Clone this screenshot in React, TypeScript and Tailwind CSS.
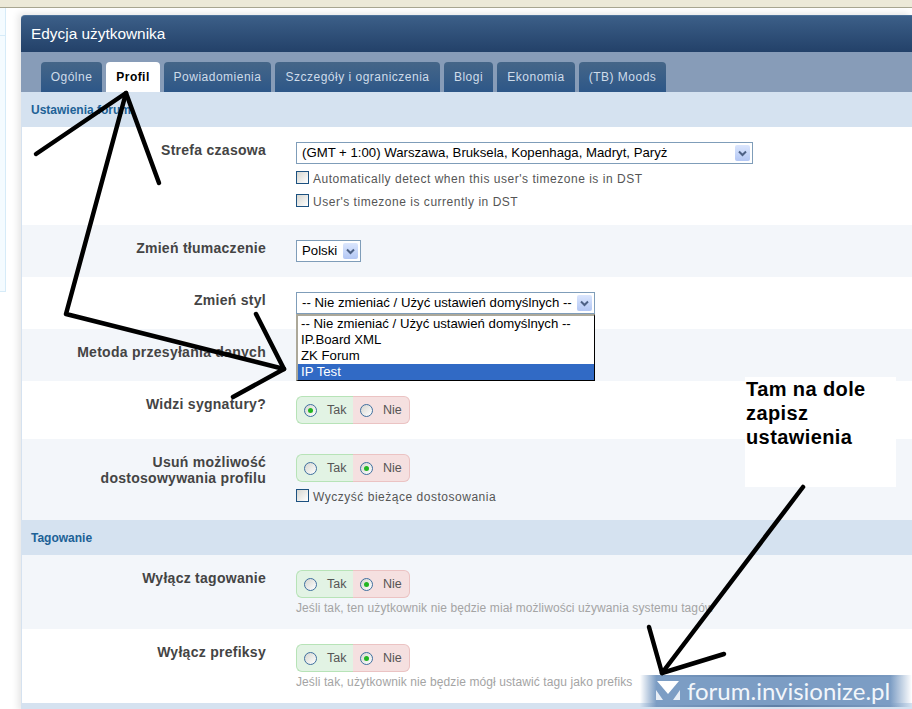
const tabs = [
  { name: "Ogólne", width: "w-[61px]" },
  { name: "Profil", width: "w-[54px]" },
  { name: "Powiadomienia", width: "w-[107px]" },
  { name: "Szczegóły i ograniczenia", width: "w-[165px]" },
  { name: "Blogi", width: "w-[49px]" },
  { name: "Ekonomia", width: "w-[78px]" },
  { name: "(TB) Moods", width: "w-[87px]" },
];

const Chevron = () => (
  <span className="flex h-[16px] w-[15px] items-center justify-center rounded-[2px] bg-gradient-to-b from-[#dbe6fd] to-[#b3c7f4]">
    <svg width="9" height="7" viewBox="0 0 9 7">
      <path d="M1 1.5 L4.5 5 L8 1.5" fill="none" stroke="#4d6185" strokeWidth="2" />
    </svg>
  </span>
);

const Select = ({ text, width }: { text: string; width: string }) => (
  <div className={`flex h-[22px] items-center justify-between border border-[#7f9db9] bg-white pl-[5px] pr-[2px] text-[13.2px] text-black ${width}`}>
    <span className="whitespace-nowrap">{text}</span>
    <Chevron />
  </div>
);

const Check = ({ label }: { label: string }) => (
  <div className="flex h-[16px] items-start gap-[4px] text-[12px] leading-[16px] tracking-[0.52px] text-[#555]">
    <span className="h-[13px] w-[13px] border border-[#1c5180] bg-gradient-to-br from-[#d6d6d0] to-white" />
    {label}
  </div>
);

const Radio = ({ on }: { on: boolean }) => (
  <span className="flex h-[13px] w-[13px] items-center justify-center rounded-full border-[1.5px] border-[#3f6f9f] bg-gradient-to-br from-[#d6d6d0] to-white">
    {on && <span className="h-[5px] w-[5px] rounded-full bg-[#22b522]" />}
  </span>
);

const YesNo = ({ yes }: { yes: boolean }) => (
  <div className="flex h-[28px] w-[114px] text-[12.5px] text-[#555]">
    <div className="flex w-[57px] items-center gap-[10px] rounded-l-[6px] border border-r-0 border-[#b7e3b7] bg-[#e2f3e4] pl-[7px]">
      <Radio on={yes} />
      Tak
    </div>
    <div className="flex w-[57px] items-center gap-[10px] rounded-r-[6px] border border-l-0 border-[#ebc3c3] bg-[#f5e0e0] pl-[7px]">
      <Radio on={!yes} />
      Nie
    </div>
  </div>
);

const Hint = ({ children }: { children: string }) => (
  <div className="mt-[2px] text-[12px] leading-[16px] tracking-[0.1px] text-[#a4a4a4] whitespace-nowrap">{children}</div>
);

const Row = ({ label, tint, height, children }: { label: React.ReactNode; tint?: boolean; height: string; children?: React.ReactNode }) => (
  <div className={`relative grid grid-cols-[244px_1fr] gap-x-[30px] border-l border-[#d5e2f0] pt-[15px] ${height} ${tint ? "bg-[#f3f6fa]" : "bg-white"}`}>
    <div className="text-right text-[14px] font-bold leading-[16px] tracking-[0.27px] text-[#444]">{label}</div>
    <div>{children}</div>
  </div>
);

const Section = ({ title, height }: { title?: string; height: string }) => (
  <div className={`flex items-center bg-[#d5e2f0] pl-[10px] text-[12px] font-bold text-[#206196] ${height}`}>{title}</div>
);

export default function App() {
  return (
    <div className="relative h-[709px] w-[912px] overflow-hidden bg-white font-['Liberation_Sans',sans-serif]">
      <div className="h-[8px] border-b border-[#a8a691] bg-[#ece9d8]" />
      <div className="flex">
        <div className="h-[284px] w-[6px] border-r border-b border-[#d6ebf8] bg-[#f4fbff] pt-[27px]">
          <div className="h-px bg-[#d6ebf8]" />
        </div>
        <div className="flex-1 pl-[15px] pt-[7px]">
          <div className="rounded-tl-[4px] shadow-[-3px_-2px_7px_rgba(0,0,0,0.1)]">
            <div className="flex h-[37px] items-center rounded-tl-[4px] border-t border-[#4d7198] bg-gradient-to-b from-[#3c5f88] to-[#234169] pl-[10px] text-[15.4px] text-white">
              Edycja użytkownika
            </div>
            <div className="flex h-[40px] items-end gap-[4px] bg-[#879cb8] pl-[20px]">
              {tabs.map((t) =>
                t.name === "Profil" ? (
                  <div key={t.name} className={`flex h-[30px] items-center justify-center rounded-t-[4px] bg-white text-[12px] font-bold tracking-[0.45px] text-black ${t.width}`}>
                    {t.name}
                  </div>
                ) : (
                  <div key={t.name} className={`flex h-[30px] items-center justify-center rounded-t-[4px] bg-gradient-to-b from-[#456688] to-[#2d5788] text-[12px] tracking-[0.5px] text-[#cfdcea] ${t.width}`}>
                    {t.name}
                  </div>
                )
              )}
            </div>
            <Section title="Ustawienia forum" height="h-[35px]" />
            <Row label="Strefa czasowa" height="h-[98px]">
              <Select text="(GMT + 1:00) Warszawa, Bruksela, Kopenhaga, Madryt, Paryż" width="w-[457px]" />
              <div className="mt-[7px] flex flex-col gap-[7px]">
                <Check label="Automatically detect when this user's timezone is in DST" />
                <Check label="User's timezone is currently in DST" />
              </div>
            </Row>
            <Row label="Zmień tłumaczenie" tint height="h-[52px]">
              <Select text="Polski" width="w-[65px]" />
            </Row>
            <Row label="Zmień styl" height="h-[52px]">
              <Select text="-- Nie zmieniać / Użyć ustawień domyślnych --" width="w-[299px]" />
              {/* otwarta lista */}
              <div className="absolute left-[274px] top-[37px] z-10 w-[299px] border border-t-2 border-l-2 border-t-[#aca899] border-l-[#aca899] border-r-black border-b-black bg-white text-[13.2px] leading-[16px] text-black">
                <div className="pl-[3px]">-- Nie zmieniać / Użyć ustawień domyślnych --</div>
                <div className="pl-[3px]">IP.Board XML</div>
                <div className="pl-[3px]">ZK Forum</div>
                <div className="bg-[#316ac5] pl-[3px] text-white">IP Test</div>
              </div>
            </Row>
            <Row label="Metoda przesyłania danych" tint height="h-[52px]" />
            <Row label="Widzi sygnatury?" height="h-[58px]">
              <YesNo yes />
            </Row>
            <Row
              label={
                <>
                  Usuń możliwość
                  <br />
                  dostosowywania profilu
                </>
              }
              tint
              height="h-[81px]"
            >
              <YesNo yes={false} />
              <div className="mt-[7px]">
                <Check label="Wyczyść bieżące dostosowania" />
              </div>
            </Row>
            <Section title="Tagowanie" height="h-[35px]" />
            <Row label="Wyłącz tagowanie" tint height="h-[74px]">
              <YesNo yes={false} />
              <Hint>Jeśli tak, ten użytkownik nie będzie miał możliwości używania systemu tagów</Hint>
            </Row>
            <Row label="Wyłącz prefiksy" height="h-[74px]">
              <YesNo yes={false} />
              <Hint>Jeśli tak, użytkownik nie będzie mógł ustawić tagu jako prefiks</Hint>
            </Row>
            <Section height="h-[10px]" />
          </div>
        </div>
      </div>

      {/* notatka */}
      <div className="absolute left-[745px] top-[377px] z-20 h-[110px] w-[151px] bg-white pl-[1px] text-[20px] font-bold leading-[24px] tracking-[0.4px] text-black">
        Tam na dole
        <br />
        zapisz
        <br />
        ustawienia
      </div>

      {/* znak wodny */}
      <div className="absolute left-[640px] top-[675px] z-20 flex h-[32px] w-[272px] items-center bg-[linear-gradient(to_right,transparent_0%,#7c9dc4_6%,#7c9dc4_92%,transparent_100%)] pl-[16px] text-white">
        <div className="absolute inset-x-[8px] top-0 h-[2px] bg-gradient-to-r from-transparent via-[#5f7fa6] to-transparent" />
        <div className="absolute inset-x-[8px] bottom-0 h-[2px] bg-gradient-to-r from-transparent via-[#5f7fa6] to-transparent" />
        <svg width="24" height="20" viewBox="0 0 24 20" className="mr-[7px]">
          <path d="M1 0 H23 L12 13 Z" fill="#fff" />
          <path d="M0 9 L7 19 H0 Z M24 9 L17 19 H24 Z" fill="#e8eef6" />
        </svg>
        <span className="font-['Lato',sans-serif] text-[24px] leading-[32px] text-[#f2f6fb] whitespace-nowrap">forum.invisionize.pl</span>
      </div>

      {/* strzałki dorysowane w paincie */}
      <svg className="absolute left-0 top-0 z-30" width="912" height="709" viewBox="0 0 912 709" fill="none" stroke="#000" strokeWidth="4.5" strokeLinecap="round" strokeLinejoin="round">
        <path d="M36 154 L126 93 L159 183" />
        <path d="M126 93 L66 314 L284 369 L233 397" />
        <path d="M284 369 L256 314" />
        <path d="M803 487 L662 673" />
        <path d="M649 627 L662 673 L724 654" />
      </svg>
    </div>
  );
}
